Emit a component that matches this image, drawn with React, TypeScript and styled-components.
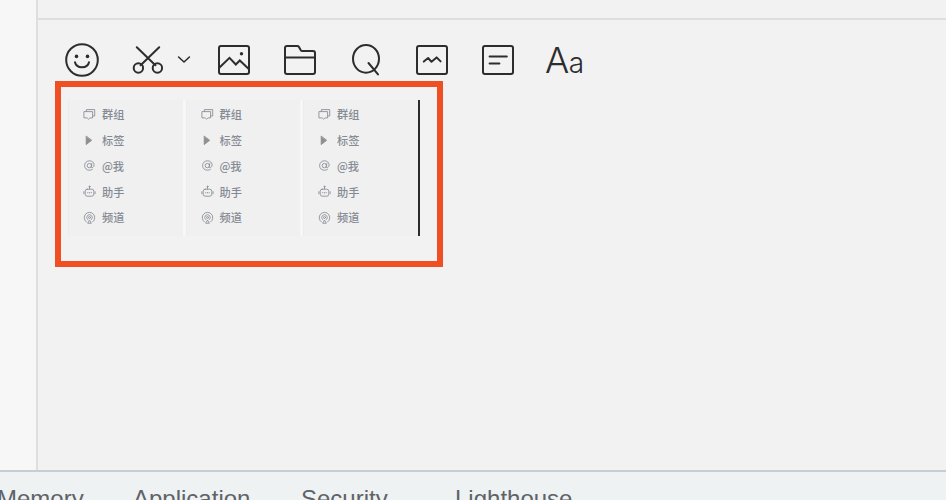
import React from "react";
import styled, { createGlobalStyle } from "styled-components";

const Global = createGlobalStyle`
  * { box-sizing: border-box; }
  body { margin: 0; overflow: hidden; background: #f2f2f2; }
`;

const Page = styled.div`
  width: 946px;
  height: 500px;
  overflow: hidden;
  display: flex;
  flex-direction: column;
  font-family: "Liberation Sans", "Noto Sans CJK SC", sans-serif;
`;

const Workspace = styled.div`
  display: flex;
  height: 470px;
`;

const Sidebar = styled.aside`
  width: 38px;
  background: #f7f7f7;
  border-right: 2px solid #dedede;
`;

const Editor = styled.main`
  flex: 1;
  background: #f2f2f2;
`;

const MessageEdge = styled.div`
  height: 20px;
  border-bottom: 2px solid #dedede;
`;

const Toolbar = styled.div`
  display: flex;
  height: 61px;
  padding: 23px 0 0 27px;
`;

const ToolIcon = styled.svg<{ $w?: number; $gap?: number }>`
  flex: none;
  width: ${(p) => p.$w ?? 34}px;
  height: 34px;
  margin-right: ${(p) => p.$gap ?? 32}px;
  fill: none;
  stroke: #2d2d2d;
  stroke-width: 2;
  stroke-linecap: round;
  stroke-linejoin: round;
`;

const FontTool = styled.span`
  display: flex;
  align-items: baseline;
  height: 34px;
  margin-left: -2px;
  font-family: Inter, sans-serif;
  font-weight: 300;
  font-size: 36px;
  line-height: 34px;
  letter-spacing: -0.5px;
  color: #2d2d2d;
`;

const SmallA = styled.span`
  font-family: Inter, sans-serif;
  font-size: 28px;
`;

const Frame = styled.section`
  width: 388px;
  height: 186px;
  margin-left: 17px;
  padding: 13px 0 0 7px;
  border: 6px solid #f04f24;
`;

const Shots = styled.div`
  display: flex;
  width: 352px;
  height: 136px;
  border-right: 2px solid #2c2c2c;
`;

const Shot = styled.div`
  flex: none;
  width: 117.5px;
  height: 136px;
  padding: 1.5px 0 0 14px;
  background: #f0f0f0;
  border-left: 1px solid #ececed;
  border-right: 3px solid #f7f7f7;
  &:last-child { width: 115px; border-right: 0; }
`;

const MenuRow = styled.div`
  display: flex;
  align-items: center;
  gap: 6px;
  height: 25.75px;
  font-family: "Noto Sans CJK SC", sans-serif;
  font-weight: 500;
  font-size: 11.2px;
  line-height: 16px;
  color: #858b94;
`;

const MenuIcon = styled.svg`
  flex: none;
  width: 13px;
  height: 13px;
  fill: none;
  stroke: #8b9099;
  stroke-width: 0.9;
  stroke-linecap: round;
  stroke-linejoin: round;
`;

const DevTabs = styled.nav`
  height: 30px;
  flex: none;
  overflow: hidden;
  display: flex;
  background: #eef2f3;
  border-top: 2px solid #c7cdd1;
  padding-top: 13px;
`;

const Tab = styled.span<{ $w: number; $shift?: number }>`
  flex: none;
  width: ${(p) => p.$w}px;
  margin-left: ${(p) => p.$shift ?? 0}px;
  font-size: 24px;
  line-height: 28px;
  color: #5f6368;
  white-space: nowrap;
`;

const icons: Record<string, React.ReactNode> = {
  群组: (
    <>
      <path d="M1.3 3.6h8.3v6.3H7L5.6 11.2 4.2 9.9H1.3z" />
      <path d="M3.4 3.3V1.6h8.3V8h-1.8" />
    </>
  ),
  标签: <path d="M3.2 2.4v8.2L8.4 6.5z" fill="#8e8e90" stroke="#8e8e90" />,
  "@我": (
    <>
      <circle cx="6.4" cy="6.6" r="2.2" />
      <path d="M8.8 4.5 8.2 7.6c0 1.7 2.9 1.1 2.9-1.6 0-2.5-2-4.2-4.6-4.2-2.9 0-4.9 2.1-4.9 4.8s2 4.6 4.8 4.6c1.3 0 2.3-.3 3.1-.9" />
    </>
  ),
  助手: (
    <>
      <rect x="2.2" y="4.2" width="8.6" height="7" rx="2" />
      <path d="M6.5 4V1.6M.9 6.7v2M12.1 6.7v2M4.8 7.5v.4M6.5 7.5v.4M8.2 7.5v.4" />
      <circle cx="6.5" cy="1.5" r=".5" />
    </>
  ),
  频道: (
    <>
      <path d="M3.4 11A5.3 5.3 0 1 1 9.6 11" />
      <path d="M4.5 8.5a2.8 2.8 0 1 1 4 0" />
      <circle cx="6.5" cy="6.5" r="1" />
      <path d="M4.9 11.9 6.5 9l1.6 2.9z" />
    </>
  ),
};

const labels = ["群组", "标签", "@我", "助手", "频道"];

function MenuShot() {
  return (
    <Shot>
      {labels.map((label) => (
        <MenuRow key={label}>
          <MenuIcon viewBox="0 0 13 13">{icons[label]}</MenuIcon>
          <span>{label}</span>
        </MenuRow>
      ))}
    </Shot>
  );
}

export default function App() {
  return (
    <Page>
      <Global />
      <Workspace>
        <Sidebar />
        <Editor>
          <MessageEdge />
          <Toolbar>
            <ToolIcon viewBox="0 0 34 34">
              <circle cx="17" cy="17" r="15.8" />
              <g fill="#2d2d2d" stroke="none">
                <circle cx="11.5" cy="13.4" r="1.8" />
                <circle cx="22.5" cy="13.4" r="1.8" />
              </g>
              <path d="M10 19.2c1.4 6.6 12.6 6.6 14 0" />
            </ToolIcon>
            <ToolIcon viewBox="0 0 34 34" $gap={12}>
              <path d="M5.8 4.3 24.4 22.2M28.2 4.3 9.6 22.2" />
              <circle cx="7.4" cy="25" r="4.7" />
              <circle cx="26.4" cy="25" r="4.7" />
            </ToolIcon>
            <ToolIcon viewBox="0 0 14 34" $w={14} $gap={26}>
              <path d="M1.6 14 7 19l5.4-5" strokeWidth="1.6" />
            </ToolIcon>
            <ToolIcon viewBox="0 0 34 34">
              <rect x="2" y="3" width="30" height="28" rx="2" />
              <path d="m2.5 24.5 10-9.7 6.3 6.7 4-4 8.7 8.2" strokeLinejoin="miter" />
              <circle cx="24.5" cy="10.7" r="1.7" fill="#2d2d2d" stroke="none" />
            </ToolIcon>
            <ToolIcon viewBox="0 0 34 34">
              <path d="M4 3h10.2q1.2 0 1.8 1l1.8 3.2q.5.8 1.4.8H30q2 0 2 2v19q0 2-2 2H4q-2 0-2-2V5q0-2 2-2zM2 14.4h30" />
            </ToolIcon>
            <ToolIcon viewBox="0 0 34 34">
              <ellipse cx="17" cy="15.8" rx="13" ry="13.9" />
              <path d="M19.5 20 29 31.4" />
            </ToolIcon>
            <ToolIcon viewBox="0 0 34 34">
              <rect x="2" y="3" width="30" height="28" rx="2" />
              <path d="m8.8 18.6 4.3-3.6 3.4 3.8 5.1-4.4 4 4" />
            </ToolIcon>
            <ToolIcon viewBox="0 0 34 34">
              <rect x="2" y="3" width="30" height="28" rx="2" />
              <path d="M8.6 13.5h17.2M8.6 20.4h9.8" />
            </ToolIcon>
            <FontTool>A<SmallA>a</SmallA></FontTool>
          </Toolbar>
          <Frame>
            <Shots>
              <MenuShot />
              <MenuShot />
              <MenuShot />
            </Shots>
          </Frame>
        </Editor>
      </Workspace>
      <DevTabs>
        <Tab $w={136} $shift={-3}>Memory</Tab>
        <Tab $w={168}>Application</Tab>
        <Tab $w={154}>Security</Tab>
        <Tab $w={140}>Lighthouse</Tab>
      </DevTabs>
    </Page>
  );
}
